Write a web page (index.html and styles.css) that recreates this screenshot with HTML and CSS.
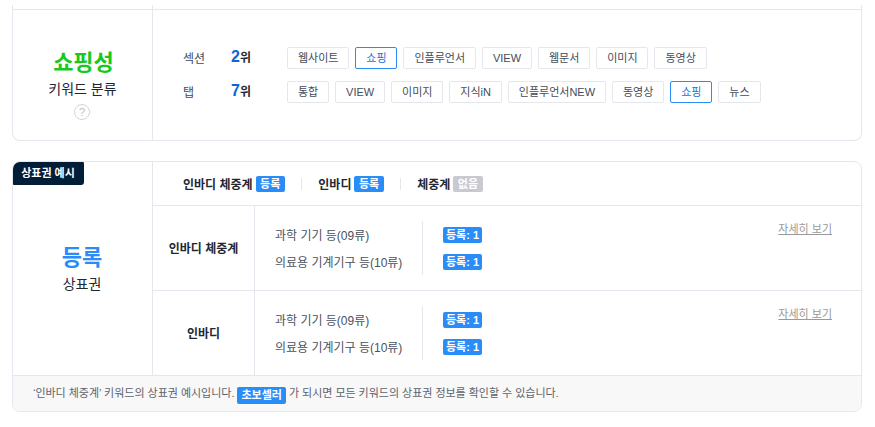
FILE: index.html
```html
<!DOCTYPE html>
<html lang="ko">
<head>
<meta charset="utf-8">
<title>키워드 분류</title>
<link rel="stylesheet" href="styles.css">
</head>
<body>
<main class="page">
  <section class="card card-top">
    <div class="stub"><div class="stub-left"></div><div class="stub-right"></div></div>
    <div class="split">
      <div class="summary summary-keyword">
        <strong class="summary-title green">쇼핑성</strong>
        <span class="summary-sub">키워드 분류</span>
        <svg class="help" width="16" height="16" viewBox="0 0 16 16" aria-label="도움말"><circle cx="8" cy="8" r="7.5" fill="#fff" stroke="#d5d5d8"/><text x="8" y="11.5" text-anchor="middle" class="help-mark">?</text></svg>
      </div>
      <div class="ranks">
        <div class="rank-row">
          <span class="rank-label">섹션</span>
          <span class="rank-value"><b>2</b>위</span>
          <div class="chips">
            <span class="chip">웹사이트</span><span class="chip active">쇼핑</span><span class="chip">인플루언서</span><span class="chip">VIEW</span><span class="chip">웹문서</span><span class="chip">이미지</span><span class="chip">동영상</span>
          </div>
        </div>
        <div class="rank-row">
          <span class="rank-label">탭</span>
          <span class="rank-value"><b>7</b>위</span>
          <div class="chips">
            <span class="chip">통합</span><span class="chip">VIEW</span><span class="chip">이미지</span><span class="chip">지식iN</span><span class="chip">인플루언서NEW</span><span class="chip">동영상</span><span class="chip active">쇼핑</span><span class="chip">뉴스</span>
          </div>
        </div>
      </div>
    </div>
  </section>

  <section class="card card-mark">
    <span class="badge">상표권 예시</span>
    <div class="split">
      <div class="summary summary-mark">
        <strong class="summary-title blue">등록</strong>
        <span class="summary-sub">상표권</span>
      </div>
      <div class="detail">
        <div class="head">
          <div class="head-item"><b>인바디 체중계</b><span class="tag">등록</span></div>
          <i class="head-sep"></i>
          <div class="head-item"><b>인바디</b><span class="tag">등록</span></div>
          <i class="head-sep"></i>
          <div class="head-item"><b>체중계</b><span class="tag off">없음</span></div>
        </div>
        <div class="mark-row">
          <div class="mark-name">인바디 체중계</div>
          <div class="mark-body">
            <div class="classes">
              <div class="class-names"><span>과학 기기 등(09류)</span><span>의료용 기계기구 등(10류)</span></div>
              <div class="class-counts"><span class="tag count">등록: 1</span><span class="tag count">등록: 1</span></div>
            </div>
            <a class="more" href="#">자세히 보기</a>
          </div>
        </div>
        <div class="mark-row">
          <div class="mark-name">인바디</div>
          <div class="mark-body">
            <div class="classes">
              <div class="class-names"><span>과학 기기 등(09류)</span><span>의료용 기계기구 등(10류)</span></div>
              <div class="class-counts"><span class="tag count">등록: 1</span><span class="tag count">등록: 1</span></div>
            </div>
            <a class="more" href="#">자세히 보기</a>
          </div>
        </div>
      </div>
    </div>
    <footer class="note">‘인바디 체중계’ 키워드의 상표권 예시입니다. <span class="tag note-tag">초보셀러</span> 가 되시면 모든 키워드의 상표권 정보를 확인할 수 있습니다.</footer>
  </section>
</main>
</body>
</html>
```
FILE: styles.css
```css
* { box-sizing: border-box; }
html, body { margin: 0; padding: 0; background: #fff; }
body {
  font-family: "Liberation Sans", "Noto Sans CJK KR", sans-serif;
  color: #2b3340;
  font-size: 12px;
}
.page {
  width: 875px;
  height: 427px;
  overflow: hidden;
  padding: 5px 13px 0 12px;
  display: flex;
  flex-direction: column;
  gap: 20px;
}
.card {
  position: relative;
  background: #fff;
  border: 1px solid #e6e6ee;
  border-radius: 8px;
}
.card-top {
  height: 136px;
  border-top: 0;
  border-radius: 0 0 8px 8px;
  display: flex;
  flex-direction: column;
}
.stub { display: flex; height: 4px; }
.stub-left { width: 140px; border-right: 1px solid #e6e6ee; }
.stub-right { flex: 1; }
.card-top .split { flex: 1; border-top: 1px solid #e6e6ee; }
.card-mark { height: 251px; display: flex; flex-direction: column; overflow: hidden; }
.split { display: flex; }
.card-mark .split { height: 213px; }
.summary {
  width: 140px;
  flex: none;
  border-right: 1px solid #e6e6ee;
  display: flex;
  flex-direction: column;
  align-items: center;
  justify-content: center;
}
.summary-keyword { padding-top: 17px; }
.summary-mark { padding: 0 1px 2px 0; }
.summary-title { font-size: 22px; line-height: 30px; padding-top: 1px; font-weight: 700; }
.green { color: #17c91d; margin-left: 2px; }
.blue { color: #2a8cf7; }
.summary-sub { font-size: 14px; line-height: 18px; color: #1f2733; margin-top: 2px; }
.help { margin: 6px 2px 0 0; display: block; }
.help-mark { font-size: 11px; fill: #bdbdc2; font-family: "Liberation Sans", sans-serif; }
.ranks {
  flex: 1;
  padding: 37px 0 0 30px;
  display: flex;
  flex-direction: column;
  gap: 12px;
}
.rank-row { display: flex; align-items: center; height: 22px; }
.rank-label { width: 48px; font-size: 12px; color: #444c59; margin-bottom: 2px; }
.rank-value { width: 56px; font-size: 12px; font-weight: 700; color: #1f2733; margin-bottom: 2px; }
.rank-value b { font-size: 16px; color: #0b66d8; }
.chips { display: flex; gap: 6px; }
.chip {
  height: 22px;
  padding: 0 9.94px;
  border: 1px solid #e6e6ee;
  border-radius: 2px;
  font-size: 11px;
  line-height: 20px;
  color: #444c59;
  white-space: nowrap;
}
.chip.active { border-color: #2a8cf7; color: #1a73e0; }
.badge {
  position: absolute;
  left: -1px;
  top: -1px;
  width: 72px;
  height: 24px;
  border-radius: 3px;
  background: #011d38;
  color: #fff;
  font-size: 11px;
  font-weight: 700;
  line-height: 24px;
  text-align: center;
}
.detail { flex: 1; display: flex; flex-direction: column; }
.head {
  height: 44px;
  flex: none;
  padding-left: 30px;
  display: flex;
  align-items: center;
  border-bottom: 1px solid #e6e6ee;
}
.head-item { display: flex; align-items: center; gap: 3px; }
.head-item b { font-size: 12px; color: #1f2733; }
.head-sep { width: 1px; height: 12px; background: #e6e6ee; margin: 0 16.5px 0 16px; }
.tag {
  display: inline-block;
  height: 16px;
  padding: 0 4.5px;
  border-radius: 2px;
  background: #2a8cf7;
  color: #fff;
  font-size: 11px;
  font-weight: 700;
  line-height: 16px;
  white-space: nowrap;
}
.tag.off { background: #c8cad0; }
.tag.count { padding: 0 3px; }
.mark-row { height: 84px; flex: none; display: flex; }
.mark-row + .mark-row { height: 85px; border-top: 1px solid #e6e6ee; }
.mark-name {
  width: 102px;
  border-right: 1px solid #e6e6ee;
  padding-bottom: 2px;
  display: flex;
  align-items: center;
  justify-content: center;
  font-size: 12px;
  font-weight: 700;
  color: #1f2733;
}
.mark-body {
  flex: 1;
  display: flex;
  justify-content: space-between;
  align-items: flex-start;
  padding: 15px 29px 0 20px;
}
.classes { display: flex; height: 54px; }
.class-names {
  width: 148px;
  border-right: 1px solid #e6e6ee;
  display: flex;
  flex-direction: column;
  justify-content: space-between;
  padding: 7.5px 0 4.5px;
  font-size: 12px;
  line-height: 15px;
  color: #4a515d;
}
.class-counts {
  padding: 6px 0 0 20px;
  display: flex;
  flex-direction: column;
  align-items: flex-start;
  gap: 11px;
}
.more { font-size: 11px; line-height: 16px; color: #999; text-decoration: underline; }
.note {
  flex: 1;
  background: #f8f8f9;
  border-top: 1px solid #e6e6ee;
  padding-left: 20px;
  font-size: 11px;
  letter-spacing: -0.02px;
  line-height: 35px;
  color: #5c626d;
}
.note-tag { padding: 0 4px; height: 17px; line-height: 17px; vertical-align: -2px; }
```
